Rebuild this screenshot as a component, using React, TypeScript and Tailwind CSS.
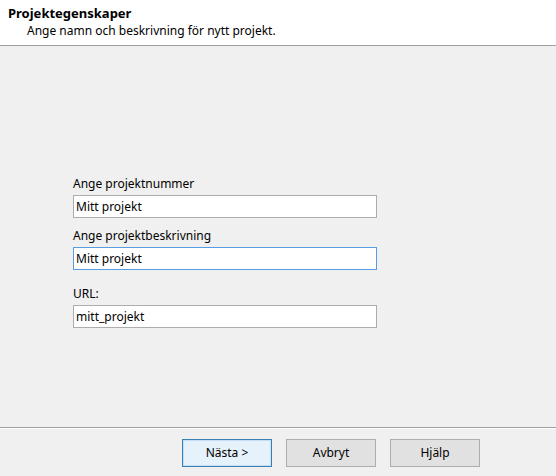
import React from "react";

const font = { fontFamily: '"Segoe UI", "Noto Sans", "Open Sans", sans-serif' };

function Field({ label, value, focused }: { label: string; value: string; focused?: boolean }) {
  return (
    <div className="flex flex-col">
      <label className="h-[17px] text-[12px] leading-[17px] text-black">{label}</label>
      <div
        className={
          "mt-[3px] flex h-[23px] w-[304px] items-center border bg-white px-[2px] text-[12px] text-black " +
          (focused ? "border-[#569de5]" : "border-[#adadad]")
        }
      >
        {value}
      </div>
    </div>
  );
}

export default function App() {
  return (
    <div className="flex h-[476px] w-[556px] flex-col bg-[#f0f0f0] text-black" style={font}>
      <div className="h-[45px] shrink-0 bg-white pl-[8px] pt-[4px]">
        <div className="text-[13px] font-bold leading-[18px]">Projektegenskaper</div>
        <div className="pl-[19px] text-[12px] leading-[18px]">Ange namn och beskrivning för nytt projekt.</div>
      </div>
      <div className="h-px bg-[#a0a0a0]" />
      <div className="flex flex-1 flex-col pl-[73px] pt-[129px]">
        <Field label="Ange projektnummer" value="Mitt projekt" />
        <div className="mt-[9px]">
          <Field label="Ange projektbeskrivning" value="Mitt projekt" focused />
        </div>
        <div className="mt-[15px]">
          <Field label="URL:" value="mitt_projekt" />
        </div>
      </div>
      <div className="h-px bg-[#a0a0a0]" />
      <div className="h-px bg-white" />
      <div className="flex h-[47px] gap-[14px] pl-[182px] pt-[10px]">
        <button className="h-[28px] w-[90px] border border-[#3c7fb1] bg-[#e5f1fb] text-[12px] shadow-[inset_0_0_0_1px_#c4e0f8]">
          Nästa &gt;
        </button>
        <button className="h-[28px] w-[90px] border border-[#adadad] bg-[#e1e1e1] text-[12px]">Avbryt</button>
        <button className="h-[28px] w-[90px] border border-[#adadad] bg-[#e1e1e1] text-[12px]">Hjälp</button>
      </div>
    </div>
  );
}
